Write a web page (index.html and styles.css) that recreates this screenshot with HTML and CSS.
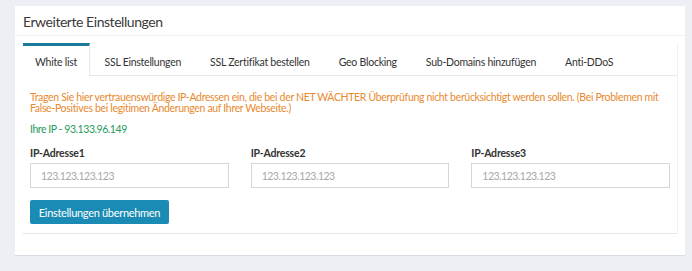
FILE: index.html
```html
<!DOCTYPE html>
<html lang="de">
<head>
<meta charset="utf-8">
<title>Erweiterte Einstellungen</title>
<link rel="stylesheet" href="styles.css">
</head>
<body>
<div class="card">
  <div class="card-header">Erweiterte Einstellungen</div>
  <div class="card-body">
    <ul class="tabs">
      <li class="tab active">White list</li>
      <li class="tab">SSL Einstellungen</li>
      <li class="tab">SSL Zertifikat bestellen</li>
      <li class="tab">Geo Blocking</li>
      <li class="tab">Sub-Domains hinzufügen</li>
      <li class="tab">Anti-DDoS</li>
    </ul>
    <div class="pane">
      <p class="note">Tragen Sie hier vertrauenswürdige IP-Adressen ein, die bei der NET WÄCHTER Überprüfung nicht berücksichtigt werden sollen. (Bei Problemen mit False-Positives bei legitimen Änderungen auf Ihrer Webseite.)</p>
      <p class="myip">Ihre IP - 93.133.96.149</p>
      <div class="fields">
        <label class="field"><span class="label">IP-Adresse1</span><input class="input" type="text" placeholder="123.123.123.123"></label>
        <label class="field"><span class="label">IP-Adresse2</span><input class="input" type="text" placeholder="123.123.123.123"></label>
        <label class="field"><span class="label">IP-Adresse3</span><input class="input" type="text" placeholder="123.123.123.123"></label>
      </div>
      <button class="btn" type="button">Einstellungen übernehmen</button>
    </div>
  </div>
</div>
</body>
</html>
```
FILE: styles.css
```css
* { box-sizing: border-box; }
html, body { margin: 0; }
body {
  background: #ecf0f4;
  font-family: Lato, "Open Sans", sans-serif;
  color: #333;
  padding: 6px 7px 0 15px;
  height: 271px;
  overflow: hidden;
}
.card {
  width: 670px;
  height: 250px;
  background: #fff;
  border-bottom: 1px solid #d6dce2;
}
.card-header {
  height: 30px;
  padding: 0 8px;
  font-size: 14px;
  letter-spacing: -0.45px;
  line-height: 31px;
  border-bottom: 1px solid #eef0f2;
  color: #3a3a3a;
}
.card-body {
  padding: 7px 7px 0 8px;
}
.tabs {
  list-style: none;
  margin: 0;
  padding: 0;
  display: flex;
  height: 33px;
  border-bottom: 1px solid #e6e9ec;
  border-right: 1px solid #eef0f2;
}
.tab {
  flex: none;
  white-space: nowrap;
  padding: 1px 14.5px 0;
  font-size: 10.5px;
  letter-spacing: -0.25px;
  line-height: 30px;
  color: #333;
  border-top: 3px solid transparent;
}
.tab.active {
  padding: 1px 12px 0;
  border-top-color: #1a7a99;
  border-right: 1px solid #e6e9ec;
  background: #fff;
  height: 33px;
}
.pane {
  border-right: 1px solid #eef0f2;
  border-bottom: 1px solid #e4e7ea;
  padding: 16px 7px 9px 7px;
}
.note {
  margin: 0;
  color: #e8892f;
  font-size: 10.5px;
  letter-spacing: -0.33px;
  line-height: 11px;
}
.myip {
  margin: 9px 0 0;
  color: #1f9a5c;
  font-size: 10.5px;
  letter-spacing: -0.45px;
  line-height: 12px;
}
.fields {
  display: grid;
  grid-template-columns: repeat(3, 1fr);
  column-gap: 22px;
  margin-top: 12px;
}
.field {
  display: flex;
  flex-direction: column;
}
.label {
  font-weight: bold;
  font-size: 10.5px;
  letter-spacing: -0.2px;
  line-height: 12px;
  color: #333;
  margin-bottom: 4px;
}
.input {
  height: 25px;
  border: 1px solid #d4d7da;
  border-radius: 0;
  padding: 0 10px;
  font-family: Lato, "Open Sans", sans-serif;
  font-size: 10.5px;
  letter-spacing: -0.5px;
  color: #555;
  outline: none;
}
.input::placeholder { color: #a8a8a8; }
.btn {
  margin-top: 12px;
  width: 139px;
  height: 24px;
  background: #1a8bb4;
  color: #fff;
  border: 0;
  border-radius: 2px;
  font-family: Lato, "Open Sans", sans-serif;
  font-size: 11px;
  letter-spacing: -0.3px;
  padding: 0;
  display: block;
}
```
